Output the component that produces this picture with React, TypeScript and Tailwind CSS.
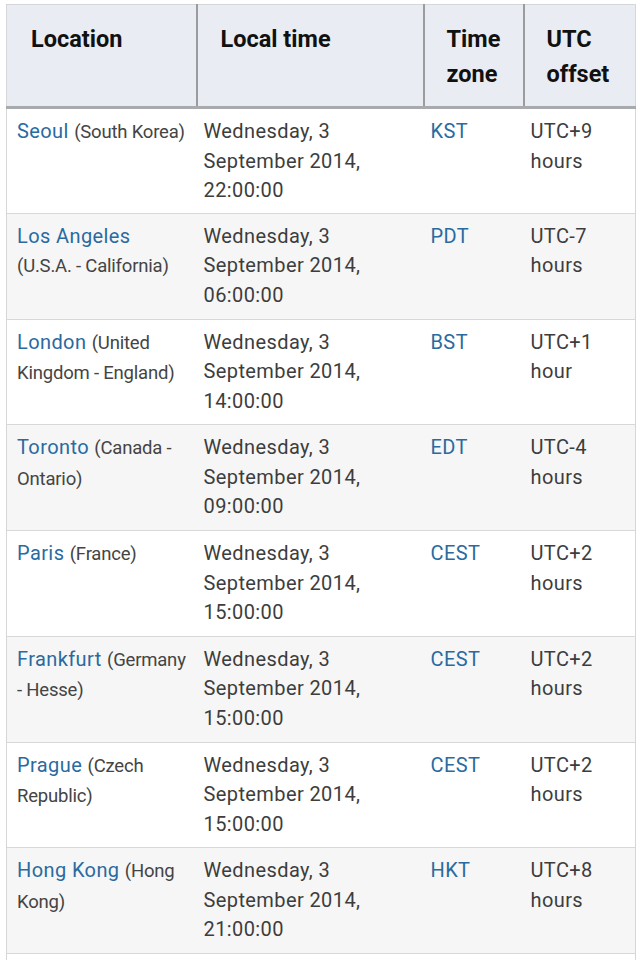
import React from 'react';

type Row = {
    city: string;
    region: string;
    time: string;
    zone: string;
    offset: string;
};

const rows: Row[] = [
    { city: 'Seoul', region: '(South Korea)', time: '22:00:00', zone: 'KST', offset: 'UTC+9 hours' },
    { city: 'Los Angeles', region: '(U.S.A. - California)', time: '06:00:00', zone: 'PDT', offset: 'UTC-7 hours' },
    { city: 'London', region: '(United Kingdom - England)', time: '14:00:00', zone: 'BST', offset: 'UTC+1 hour' },
    { city: 'Toronto', region: '(Canada - Ontario)', time: '09:00:00', zone: 'EDT', offset: 'UTC-4 hours' },
    { city: 'Paris', region: '(France)', time: '15:00:00', zone: 'CEST', offset: 'UTC+2 hours' },
    { city: 'Frankfurt', region: '(Germany - Hesse)', time: '15:00:00', zone: 'CEST', offset: 'UTC+2 hours' },
    { city: 'Prague', region: '(Czech Republic)', time: '15:00:00', zone: 'CEST', offset: 'UTC+2 hours' },
    { city: 'Hong Kong', region: '(Hong Kong)', time: '21:00:00', zone: 'HKT', offset: 'UTC+8 hours' },
    { city: 'Singapore', region: '(Singapore)', time: '21:00:00', zone: 'SGT', offset: 'UTC+8 hours' },
];

const App = () => {
    return (
        <div className="h-[960px] overflow-hidden bg-white pt-[4px] pl-[6px] font-['Roboto',sans-serif]">
            <table className="w-[629px] table-fixed border-collapse border-x border-t border-[#d4d6d8]">
                <colgroup>
                    <col className="w-[190px]" />
                    <col className="w-[227px]" />
                    <col className="w-[100px]" />
                    <col className="w-[112px]" />
                </colgroup>
                {/* Header */}
                <thead>
                    <tr className="h-[103px] bg-[#e9edf3] text-left align-top text-[23.5px] font-bold leading-[35px] text-[#111]">
                        <th className="border-b-[3px] border-b-[#a8abae] pl-[24px] pt-[17px]">Location</th>
                        <th className="border-b-[3px] border-l-2 border-b-[#a8abae] border-l-[#9a9c9e] pl-[23px] pt-[17px]">Local time</th>
                        <th className="border-b-[3px] border-l-2 border-b-[#a8abae] border-l-[#9a9c9e] pl-[22px] pt-[17px]">Time zone</th>
                        <th className="border-b-[3px] border-l-2 border-b-[#a8abae] border-l-[#9a9c9e] pl-[22px] pt-[17px]">UTC offset</th>
                    </tr>
                </thead>
                {/* Rows */}
                <tbody className="text-[20px] leading-[29.6px] tracking-[0.4px] text-[#3d3d3d]">
                    {rows.map((r, i) => (
                        <tr key={r.city} className={`h-[105.75px] align-top border-b border-[#d8d8d8] ${i % 2 === 1 ? 'bg-[#f6f6f6]' : 'bg-white'}`}>
                            <td className="pt-[8px] pb-[6px] pl-[10px] pr-[10px]">
                                <span className="text-[#2a6aa0]">{r.city}</span>{' '}
                                <span className="text-[18.5px] tracking-[-0.2px] text-[#444]">{r.region}</span>
                            </td>
                            <td className="pt-[8px] pb-[6px] pl-[7px] pr-[6px]">
                                Wednesday, 3 September 2014, {r.time}
                            </td>
                            <td className="pt-[8px] pb-[6px] pl-[7px] text-[#2a6aa0]">{r.zone}</td>
                            <td className="pt-[8px] pb-[6px] pl-[7px] pr-[10px]">{r.offset}</td>
                        </tr>
                    ))}
                </tbody>
            </table>
        </div>
    );
};

export default App;
